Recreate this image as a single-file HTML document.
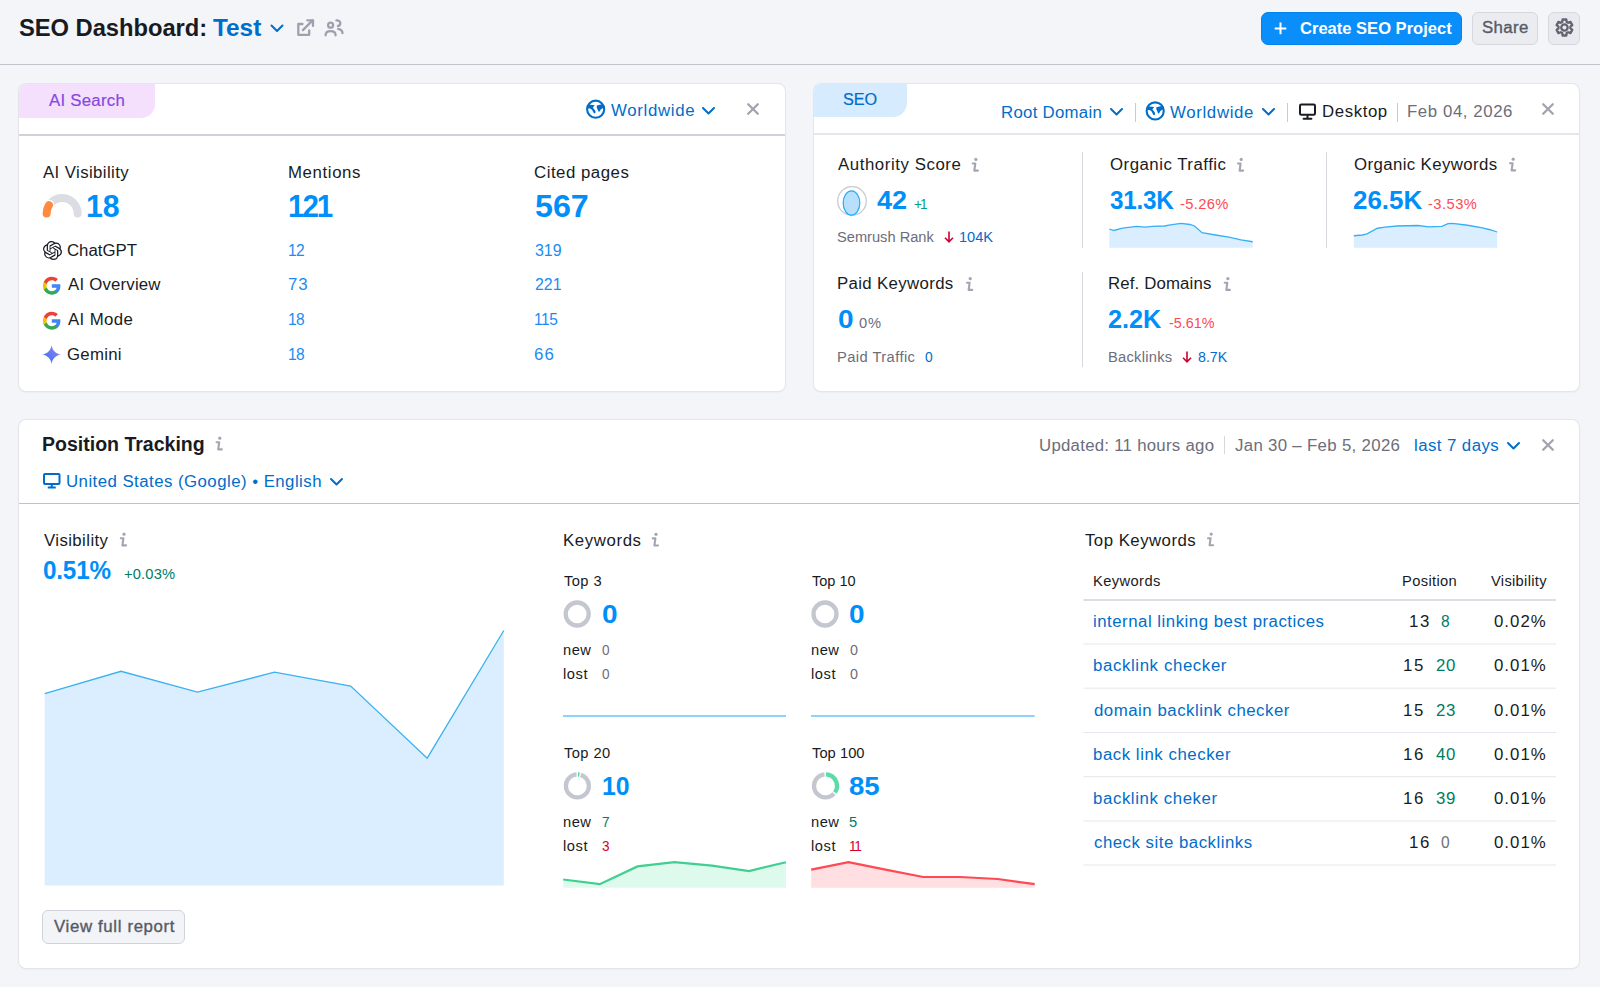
<!DOCTYPE html>
<html><head><meta charset="utf-8">
<style>
*{margin:0;padding:0;box-sizing:border-box}
html,body{width:1600px;height:987px;overflow:hidden;background:#f4f5f9;font-family:"Liberation Sans",sans-serif;color:#191b23}
.t{position:absolute;white-space:nowrap}
.a{position:absolute}
.card{position:absolute;background:#fff;border-radius:7px;box-shadow:0 0 0 1px #e4e5eb,0 1px 2px rgba(25,27,35,.10)}
.hl{position:absolute;height:1px;background:#c4c7cf}
.vl{position:absolute;width:1px;background:#d6d8de}
svg{position:absolute;overflow:visible}
</style></head><body>
<!-- header -->
<div class="hl" style="left:0;top:64px;width:1600px;background:#bfc2cb"></div>
<svg style="left:270px;top:24px" width="14" height="9" viewBox="0 0 14 9"><polyline points="1.5,1.5 7,7 12.5,1.5" fill="none" stroke="#006dca" stroke-width="2" stroke-linecap="round" stroke-linejoin="round"/></svg>
<!-- external link -->
<svg style="left:0;top:0" width="1600" height="987"><g fill="none" stroke="#9ea1ad" stroke-width="2.3" stroke-linecap="round" stroke-linejoin="round"><path d="M302.5,24 H298.3 V34.8 H309.2 V30.5"/><path d="M302.9,30.1 L312.6,20.4"/><path d="M307.3,20.3 H313 V25.9"/>
<circle cx="330.6" cy="25.2" r="2.5"/><path d="M325.6,35.3 C325.6,32.7 327.6,31.2 330.6,31.2 C333.6,31.2 335.6,32.7 335.6,35.3"/><path d="M336.4,20.4 C338.8,20.1 340.3,21.6 340.3,23.3 C340.3,24.9 339.3,25.8 337.9,26"/><path d="M338.2,28.9 C340.9,29.5 342.5,31.2 342.5,33.2"/></g></svg>
<!-- primary button -->
<div class="a" style="left:1261px;top:11.5px;width:201px;height:33px;background:#0a8ef9;border:1px solid #0483ec;border-radius:7px"></div>
<svg style="left:1273.5px;top:21.5px" width="13" height="13" viewBox="0 0 13 13"><path d="M6.5 0.6V12.2M0.7 6.4H12.3" stroke="#fff" stroke-width="2"/></svg>
<div class="a" style="left:1472px;top:11.5px;width:66px;height:33px;background:#ebecf0;border:1px solid #d5d7dd;border-radius:6px"></div>
<div class="a" style="left:1548px;top:11.5px;width:32px;height:33px;background:#e9eaf0;border:1px solid #d5d7dd;border-radius:6px"></div>
<svg style="left:0;top:0" width="1600" height="987"><path fill="none" stroke="#62646f" stroke-width="2.3" stroke-linejoin="round" d="M1562.61,19.51 L1566.29,19.51 L1566.70,21.94 L1568.14,22.77 L1570.45,21.91 L1572.29,25.10 L1570.39,26.66 L1570.39,28.34 L1572.29,29.90 L1570.45,33.09 L1568.14,32.23 L1566.70,33.06 L1566.29,35.49 L1562.61,35.49 L1562.20,33.06 L1560.76,32.23 L1558.45,33.09 L1556.61,29.90 L1558.51,28.34 L1558.51,26.66 L1556.61,25.10 L1558.45,21.91 L1560.76,22.77 L1562.20,21.94Z"/><circle cx="1564.45" cy="27.5" r="3.2" fill="none" stroke="#62646f" stroke-width="2.3"/></svg>

<!-- AI card -->
<div class="card" style="left:19px;top:84px;width:766px;height:307px"></div>
<div class="a" style="left:19px;top:84px;width:136px;height:34px;background:#f4e0fd;border-radius:7px 0 14px 0"></div>
<div class="hl" style="left:19px;top:134px;width:766px;height:2px;background:#d0d1d9"></div>
<!-- globe -->
<svg style="left:0;top:0" width="1600" height="987"><g transform="translate(595.66,109.2)"><circle cx="0" cy="0" r="8.55" fill="none" stroke="#006dca" stroke-width="2.1"/><path fill="#006dca" d="M-7.9,-4.3 C-5.5,-4.6 -3,-4.4 -0.9,-3.9 C-1.6,-3.1 -2.6,-2 -2.7,-1.2 C-1.6,-0.2 -0.3,1 -0.15,2.4 C0,3.4 -0.4,4.2 -1.1,4.3 C-1.8,4.3 -2.3,3.3 -2.8,2.1 C-3.4,0.6 -4.6,-0.5 -6.2,-0.8 L-8.2,-1 Z"/><path fill="#006dca" d="M1.3,-3.6 C3.2,-4.2 5,-4.6 6.6,-5 L8.3,-2.4 L8,-1.3 C6.8,-1 5.6,-0.3 4.9,0.6 C4.3,1.5 4,2.6 3.5,2.6 C2.9,2.6 2.5,1.9 2.3,1.1 C2,-0.1 1.2,-0.9 1.1,-1.8 C1,-2.6 1.1,-3.2 1.3,-3.6 Z"/></g></svg>
<svg style="left:702px;top:107px" width="13" height="8" viewBox="0 0 13 8"><polyline points="1,1 6.5,6.5 12,1" fill="none" stroke="#006dca" stroke-width="2" stroke-linecap="round" stroke-linejoin="round"/></svg>
<svg style="left:747px;top:103px" width="12" height="12" viewBox="0 0 12 12"><path d="M1.2 1.2L10.8 10.8M10.8 1.2L1.2 10.8" stroke="#a1a4b0" stroke-width="2.3" stroke-linecap="round"/></svg>
<!-- gauge -->
<svg style="left:0;top:0" width="1600" height="987"><path d="M46.6,213.5 A15.5,15.5 0 0 1 77.6,213.5" fill="none" stroke="#dcdde3" stroke-width="8" stroke-linecap="round"/><path d="M46.6,213.5 A15.5,15.5 0 0 1 49.0,205.2" fill="none" stroke="#fff" stroke-width="11" stroke-linecap="round"/><path d="M46.6,213.5 A15.5,15.5 0 0 1 49.0,205.2" fill="none" stroke="#ff8a40" stroke-width="8" stroke-linecap="round"/></svg>
<!-- chatgpt -->
<svg style="left:42.5px;top:241px" width="19" height="19" viewBox="0 0 24 24"><path fill="#191b23" d="M22.2819 9.8211a5.9847 5.9847 0 0 0-.5157-4.9108 6.0462 6.0462 0 0 0-6.5098-2.9A6.0651 6.0651 0 0 0 4.9807 4.1818a5.9847 5.9847 0 0 0-3.9977 2.9 6.0462 6.0462 0 0 0 .7427 7.0966 5.98 5.98 0 0 0 .511 4.9107 6.051 6.051 0 0 0 6.5146 2.9001A5.9847 5.9847 0 0 0 13.2599 24a6.0557 6.0557 0 0 0 5.7718-4.2058 5.9894 5.9894 0 0 0 3.9977-2.9001 6.0557 6.0557 0 0 0-.7475-7.0729zm-9.022 12.6081a4.4755 4.4755 0 0 1-2.8764-1.0408l.1419-.0804 4.7783-2.7582a.7948.7948 0 0 0 .3927-.6813v-6.7369l2.02 1.1686a.071.071 0 0 1 .038.052v5.5826a4.504 4.504 0 0 1-4.4945 4.4944zm-9.6607-4.1254a4.4708 4.4708 0 0 1-.5346-3.0137l.142.0852 4.783 2.7582a.7712.7712 0 0 0 .7806 0l5.8428-3.3685v2.3324a.0804.0804 0 0 1-.0332.0615L9.74 19.9502a4.4992 4.4992 0 0 1-6.1408-1.6464zM2.3408 7.8956a4.485 4.485 0 0 1 2.3655-1.9728V11.6a.7664.7664 0 0 0 .3879.6765l5.8144 3.3543-2.0201 1.1685a.0757.0757 0 0 1-.071 0l-4.8303-2.7865A4.504 4.504 0 0 1 2.3408 7.872zm16.5963 3.8558L13.1038 8.364 15.1192 7.2a.0757.0757 0 0 1 .071 0l4.8303 2.7913a4.4944 4.4944 0 0 1-.6765 8.1042v-5.6772a.79.79 0 0 0-.407-.667zm2.0107-3.0231l-.142-.0852-4.7735-2.7818a.7759.7759 0 0 0-.7854 0L9.409 9.2297V6.8974a.0662.0662 0 0 1 .0284-.0615l4.8303-2.7866a4.4992 4.4992 0 0 1 6.6802 4.66zM8.3065 12.863l-2.02-1.1638a.0804.0804 0 0 1-.038-.0567V6.0742a4.4992 4.4992 0 0 1 7.3757-3.4537l-.142.0805L8.704 5.459a.7948.7948 0 0 0-.3927.6813zm1.0976-2.3654l2.602-1.4998 2.6069 1.4998v2.9994l-2.5974 1.5-2.6067-1.5Z"/></svg>
<!-- google G x2 -->
<svg style="left:41.8px;top:275.8px" width="19.6" height="19.6" viewBox="0 0 48 48"><path fill="#4285F4" d="M45.1 24.5c0-1.6-.1-3.1-.4-4.5H24v8.5h11.8c-.5 2.7-2.1 5-4.4 6.6v5.5h7.1c4.2-3.9 6.6-9.5 6.6-16.1z"/><path fill="#34A853" d="M24 46c5.9 0 10.9-2 14.5-5.3l-7.1-5.5c-2 1.3-4.5 2.1-7.4 2.1-5.7 0-10.6-3.9-12.3-9.1H4.4v5.7C8 41.1 15.4 46 24 46z"/><path fill="#FBBC05" d="M11.7 28.2c-.4-1.3-.7-2.7-.7-4.2s.3-2.9.7-4.2v-5.7H4.4C2.9 17.1 2 20.4 2 24s.9 6.9 2.4 9.9l7.3-5.7z"/><path fill="#EA4335" d="M24 10.7c3.2 0 6.1 1.1 8.4 3.3l6.3-6.3C34.9 4.2 29.9 2 24 2 15.4 2 8 6.9 4.4 14.1l7.3 5.7c1.7-5.2 6.6-9.1 12.3-9.1z"/></svg>
<svg style="left:41.8px;top:310.8px" width="19.6" height="19.6" viewBox="0 0 48 48"><path fill="#4285F4" d="M45.1 24.5c0-1.6-.1-3.1-.4-4.5H24v8.5h11.8c-.5 2.7-2.1 5-4.4 6.6v5.5h7.1c4.2-3.9 6.6-9.5 6.6-16.1z"/><path fill="#34A853" d="M24 46c5.9 0 10.9-2 14.5-5.3l-7.1-5.5c-2 1.3-4.5 2.1-7.4 2.1-5.7 0-10.6-3.9-12.3-9.1H4.4v5.7C8 41.1 15.4 46 24 46z"/><path fill="#FBBC05" d="M11.7 28.2c-.4-1.3-.7-2.7-.7-4.2s.3-2.9.7-4.2v-5.7H4.4C2.9 17.1 2 20.4 2 24s.9 6.9 2.4 9.9l7.3-5.7z"/><path fill="#EA4335" d="M24 10.7c3.2 0 6.1 1.1 8.4 3.3l6.3-6.3C34.9 4.2 29.9 2 24 2 15.4 2 8 6.9 4.4 14.1l7.3 5.7c1.7-5.2 6.6-9.1 12.3-9.1z"/></svg>
<!-- gemini -->
<svg style="left:42.3px;top:344.6px" width="19.2" height="19.2" viewBox="0 0 24 24"><defs><linearGradient id="gem" x1="0" y1="1" x2="1" y2="0"><stop offset="0" stop-color="#1c7df2"/><stop offset="0.55" stop-color="#6e79f0"/><stop offset="1" stop-color="#a68ae6"/></linearGradient></defs><path fill="url(#gem)" d="M12 0C12.6 6.4 17.6 11.4 24 12C17.6 12.6 12.6 17.6 12 24C11.4 17.6 6.4 12.6 0 12C6.4 11.4 11.4 6.4 12 0Z"/></svg>

<!-- SEO card -->
<div class="card" style="left:814px;top:84px;width:765px;height:307px"></div>
<div class="a" style="left:814px;top:84px;width:93px;height:33px;background:#d6ebfd;border-radius:7px 0 14px 0"></div>
<div class="hl" style="left:814px;top:133px;width:765px;height:2px;background:#e6e7ec"></div>
<svg style="left:1110px;top:108px" width="13" height="8" viewBox="0 0 13 8"><polyline points="1,1 6.5,6.5 12,1" fill="none" stroke="#006dca" stroke-width="2" stroke-linecap="round" stroke-linejoin="round"/></svg>
<div class="vl" style="left:1135px;top:103px;height:19px;background:#c9cbd2"></div>
<svg style="left:0;top:0" width="1600" height="987"><g transform="translate(1155.2,110.9)"><circle cx="0" cy="0" r="8.55" fill="none" stroke="#006dca" stroke-width="2.1"/><path fill="#006dca" d="M-7.9,-4.3 C-5.5,-4.6 -3,-4.4 -0.9,-3.9 C-1.6,-3.1 -2.6,-2 -2.7,-1.2 C-1.6,-0.2 -0.3,1 -0.15,2.4 C0,3.4 -0.4,4.2 -1.1,4.3 C-1.8,4.3 -2.3,3.3 -2.8,2.1 C-3.4,0.6 -4.6,-0.5 -6.2,-0.8 L-8.2,-1 Z"/><path fill="#006dca" d="M1.3,-3.6 C3.2,-4.2 5,-4.6 6.6,-5 L8.3,-2.4 L8,-1.3 C6.8,-1 5.6,-0.3 4.9,0.6 C4.3,1.5 4,2.6 3.5,2.6 C2.9,2.6 2.5,1.9 2.3,1.1 C2,-0.1 1.2,-0.9 1.1,-1.8 C1,-2.6 1.1,-3.2 1.3,-3.6 Z"/></g></svg>
<svg style="left:1262px;top:108px" width="13" height="8" viewBox="0 0 13 8"><polyline points="1,1 6.5,6.5 12,1" fill="none" stroke="#006dca" stroke-width="2" stroke-linecap="round" stroke-linejoin="round"/></svg>
<div class="vl" style="left:1287px;top:103px;height:19px;background:#c9cbd2"></div>
<!-- desktop icon -->
<svg style="left:1299px;top:104px" width="17" height="16" viewBox="0 0 17 16"><rect x="1" y="0.6" width="15" height="10.2" rx="1.3" fill="none" stroke="#191b23" stroke-width="2"/><path d="M8.5 12V14M4.6 14.8H12.4" stroke="#191b23" stroke-width="2" stroke-linecap="round"/></svg>
<div class="vl" style="left:1397px;top:103px;height:19px;background:#c9cbd2"></div>
<svg style="left:1542px;top:103px" width="12" height="12" viewBox="0 0 12 12"><path d="M1.2 1.2L10.8 10.8M10.8 1.2L1.2 10.8" stroke="#a1a4b0" stroke-width="2.3" stroke-linecap="round"/></svg>
<!-- AS icon -->
<svg style="left:837px;top:185.5px" width="30" height="30" viewBox="0 0 30 30"><circle cx="15" cy="15" r="14.3" fill="#fff" stroke="#c4c7cf" stroke-width="1.2"/><ellipse cx="14.5" cy="17" rx="8.3" ry="12.1" fill="#b8e0fd" stroke="#22adff" stroke-width="1.2"/></svg>
<div class="vl" style="left:1082px;top:152px;height:96px"></div>
<div class="vl" style="left:1326px;top:152px;height:96px"></div>
<div class="vl" style="left:1082px;top:272px;height:95px"></div>
<svg style="left:944px;top:231px" width="10" height="12" viewBox="0 0 10 12"><path d="M5 0.5V10.5M1 6.8L5 10.8L9 6.8" fill="none" stroke="#d1002f" stroke-width="1.6"/></svg>
<svg style="left:1182px;top:351px" width="10" height="12" viewBox="0 0 10 12"><path d="M5 0.5V10.5M1 6.8L5 10.8L9 6.8" fill="none" stroke="#d1002f" stroke-width="1.6"/></svg>
<!-- sparklines -->
<svg style="left:0;top:0" width="1600" height="987"><path d="M1109.3,229 L1113.8,230.5 1122.5,228.2 1136.7,226.4 1145,227.2 1152.5,226.4 1164.5,226 1170.5,224.8 1181,223.3 1190,224.5 1194.5,226 1202,232.75 1215.5,235 1229,237.2 1241,239.8 1252.7,241.75 L1252.7,247.8 1109.3,247.8Z" fill="#dbeeff"/><path d="M1109.3,229 L1113.8,230.5 1122.5,228.2 1136.7,226.4 1145,227.2 1152.5,226.4 1164.5,226 1170.5,224.8 1181,223.3 1190,224.5 1194.5,226 1202,232.75 1215.5,235 1229,237.2 1241,239.8 1252.7,241.75" fill="none" stroke="#36b0f5" stroke-width="1.3"/>
<path d="M1353.8,235.75 L1362.5,235 1367,233.8 1377.5,228.25 1385,227.2 1397,226 1418,225.5 1428.5,226.9 1442,226.3 1448,223.6 1452.5,223.45 1467.5,225.25 1482.5,227.8 1490,229.75 1497.2,232 L1497.2,247.8 1353.8,247.8Z" fill="#dbeeff"/><path d="M1353.8,235.75 L1362.5,235 1367,233.8 1377.5,228.25 1385,227.2 1397,226 1418,225.5 1428.5,226.9 1442,226.3 1448,223.6 1452.5,223.45 1467.5,225.25 1482.5,227.8 1490,229.75 1497.2,232" fill="none" stroke="#36b0f5" stroke-width="1.3"/></svg>


<!-- PT card -->
<div class="card" style="left:19px;top:420px;width:1560px;height:548px"></div>
<div class="hl" style="left:19px;top:503px;width:1560px;background:#c0c3cc"></div>
<svg style="left:43px;top:473px" width="18" height="16" viewBox="0 0 18 16"><rect x="1" y="1" width="15.5" height="10" rx="1" fill="none" stroke="#006dca" stroke-width="2"/><path d="M8.75 11V14M4.75 14.5H12.75" stroke="#006dca" stroke-width="2"/></svg>
<svg style="left:330px;top:477.5px" width="13" height="8" viewBox="0 0 13 8"><polyline points="1,1 6.5,6.5 12,1" fill="none" stroke="#006dca" stroke-width="2" stroke-linecap="round" stroke-linejoin="round"/></svg>
<div class="vl" style="left:1223.5px;top:436px;height:18px;background:#d6d8de"></div>
<svg style="left:1507px;top:441.5px" width="13" height="8" viewBox="0 0 13 8"><polyline points="1,1 6.5,6.5 12,1" fill="none" stroke="#006dca" stroke-width="2" stroke-linecap="round" stroke-linejoin="round"/></svg>
<svg style="left:1542px;top:439px" width="12" height="12" viewBox="0 0 12 12"><path d="M1.2 1.2L10.8 10.8M10.8 1.2L1.2 10.8" stroke="#a1a4b0" stroke-width="2.3" stroke-linecap="round"/></svg>
<!-- visibility chart -->
<svg style="left:0;top:0" width="1600" height="987"><path d="M44.7,693.6 L121,671.3 197.5,692.1 274.4,672.2 350.7,686 427.2,758.2 503.8,630.5 L503.8,885.6 44.7,885.6Z" fill="#dbeeff"/><path d="M44.7,693.6 L121,671.3 197.5,692.1 274.4,672.2 350.7,686 427.2,758.2 503.8,630.5" fill="none" stroke="#3cb1f0" stroke-width="1.3"/>
<!-- keyword lines -->
<line x1="563" y1="716" x2="786" y2="716" stroke="#8fd1fb" stroke-width="2"/>
<line x1="811" y1="716" x2="1034.7" y2="716" stroke="#8fd1fb" stroke-width="2"/>
<path d="M563.2,879.5 L599.8,884.2 637.5,866.4 674.4,862.2 712,865.6 749,871.1 785.9,862.2 L785.9,887.8 563.2,887.8Z" fill="#defaed"/><path d="M563.2,879.5 L599.8,884.2 637.5,866.4 674.4,862.2 712,865.6 749,871.1 785.9,862.2" fill="none" stroke="#3fcf91" stroke-width="2.2"/>
<path d="M811.2,869.6 L848.5,862.2 885.5,869.6 923.2,877 960,877 997.8,879 1034.7,884.2 L1034.7,887.8 811.2,887.8Z" fill="#ffdfe1"/><path d="M811.2,869.6 L848.5,862.2 885.5,869.6 923.2,877 960,877 997.8,879 1034.7,884.2" fill="none" stroke="#ff4953" stroke-width="2.2"/>
<!-- donuts -->
<circle cx="577.2" cy="614" r="11.5" fill="none" stroke="#c4c7cf" stroke-width="4.3"/>
<circle cx="825" cy="614" r="11.5" fill="none" stroke="#c4c7cf" stroke-width="4.3"/>
<circle cx="577.4" cy="785.9" r="11.5" fill="none" stroke="#c4c7cf" stroke-width="4.3"/>
<path d="M576.60,774.43 A11.5,11.5 0 0 1 580.76,774.90" fill="none" stroke="#fff" stroke-width="5.5"/>
<path d="M578.00,774.42 A11.5,11.5 0 0 1 579.40,774.57" fill="none" stroke="#4bd69f" stroke-width="4.3"/>
<circle cx="825.5" cy="785.9" r="11.5" fill="none" stroke="#c4c7cf" stroke-width="4.3"/>
<path d="M824.50,774.44 A11.5,11.5 0 0 1 834.05,793.60" fill="none" stroke="#fff" stroke-width="5.5"/>
<path d="M825.90,774.41 A11.5,11.5 0 0 1 834.92,792.50" fill="none" stroke="#59dca8" stroke-width="4.3"/>
<!-- table lines -->
<rect x="1083.5" y="599.2" width="472.5" height="1.6" fill="#d6d8de"/>
<rect x="1083.5" y="643.5" width="472.5" height="1" fill="#e6e7ec"/>
<rect x="1083.5" y="687.7" width="472.5" height="1" fill="#e6e7ec"/>
<rect x="1083.5" y="732" width="472.5" height="1" fill="#e6e7ec"/>
<rect x="1083.5" y="776.2" width="472.5" height="1" fill="#e6e7ec"/>
<rect x="1083.5" y="820.5" width="472.5" height="1" fill="#e6e7ec"/>
<rect x="1083.5" y="864.5" width="472.5" height="1" fill="#e6e7ec"/>
</svg>
<div class="a" style="left:42px;top:910px;width:143px;height:34px;background:#f3f4f7;border:1px solid #d1d3da;border-radius:6px"></div>
<!-- info icons -->
<svg style="left:0;top:0" width="1600" height="987"><defs><g id="info"><circle cx="3.8" cy="1.7" r="1.6" fill="#a3a6b2"/><path d="M0.6 5.8H3.2L2.2 12.9H5.8" fill="none" stroke="#a3a6b2" stroke-width="2.1" stroke-linecap="round" stroke-linejoin="round"/></g></defs><use href="#info" x="972.1" y="157.7"/><use href="#info" x="1237.4" y="157.7"/><use href="#info" x="1509.4" y="157.5"/><use href="#info" x="966.4" y="277"/><use href="#info" x="1224.1" y="277"/><use href="#info" x="216" y="436.5"/><use href="#info" x="120.2" y="532.5"/><use href="#info" x="652.2" y="532.6"/><use href="#info" x="1207.4" y="532.4"/></svg>
<div class="t" style="left:18.78px;top:15.50px;font-size:24.5px;line-height:24.5px;font-weight:700;color:#191b23;letter-spacing:-0.055px;transform:scaleX(0.9700);transform-origin:0 0;">SEO Dashboard:</div>
<div class="t" style="left:213.20px;top:15.50px;font-size:24.5px;line-height:24.5px;font-weight:700;color:#006dca;letter-spacing:0.000px;transform:scaleX(0.9939);transform-origin:0 0;">Test</div>
<div class="t" style="left:1299.90px;top:19.60px;font-size:16.5px;line-height:16.5px;font-weight:700;color:#ffffff;letter-spacing:0.000px;transform:scaleX(1.0026);transform-origin:0 0;">Create SEO Project</div>
<div class="t" style="left:1482.30px;top:20.40px;font-size:16px;line-height:16px;font-weight:400;color:#575a66;letter-spacing:0.333px;transform:scaleX(1.0500);transform-origin:0 0;-webkit-text-stroke:0.35px #575a66">Share</div>
<div class="t" style="left:48.50px;top:93.00px;font-size:16px;line-height:16px;font-weight:400;color:#8649e1;letter-spacing:0.238px;transform:scaleX(1.0500);transform-origin:0 0;-webkit-text-stroke:0.2px #8649e1">AI Search</div>
<div class="t" style="left:610.60px;top:102.50px;font-size:16px;line-height:16px;font-weight:400;color:#006dca;letter-spacing:0.655px;transform:scaleX(1.0500);transform-origin:0 0;">Worldwide</div>
<div class="t" style="left:43.20px;top:165.00px;font-size:16px;line-height:16px;font-weight:400;color:#191b23;letter-spacing:0.377px;transform:scaleX(1.0500);transform-origin:0 0;">AI Visibility</div>
<div class="t" style="left:288.45px;top:165.00px;font-size:16px;line-height:16px;font-weight:400;color:#191b23;letter-spacing:0.585px;transform:scaleX(1.0500);transform-origin:0 0;">Mentions</div>
<div class="t" style="left:534.35px;top:165.00px;font-size:16px;line-height:16px;font-weight:400;color:#191b23;letter-spacing:0.495px;transform:scaleX(1.0500);transform-origin:0 0;">Cited pages</div>
<div class="t" style="left:85.91px;top:190.60px;font-size:30.5px;line-height:30.5px;font-weight:700;color:#008ff8;letter-spacing:0.000px;transform:scaleX(0.9935);transform-origin:0 0;">18</div>
<div class="t" style="left:287.56px;top:190.60px;font-size:30.5px;line-height:30.5px;font-weight:700;color:#008ff8;letter-spacing:-2.129px;transform:scaleX(0.9700);transform-origin:0 0;">121</div>
<div class="t" style="left:534.94px;top:190.60px;font-size:30.5px;line-height:30.5px;font-weight:700;color:#008ff8;letter-spacing:0.000px;transform:scaleX(1.0571);transform-origin:0 0;">567</div>
<div class="t" style="left:66.55px;top:243.00px;font-size:16px;line-height:16px;font-weight:400;color:#191b23;letter-spacing:0.000px;transform:scaleX(1.0485);transform-origin:0 0;">ChatGPT</div>
<div class="t" style="left:288.03px;top:243.00px;font-size:16px;line-height:16px;font-weight:400;color:#1a8cf5;letter-spacing:-0.763px;transform:scaleX(0.9700);transform-origin:0 0;">12</div>
<div class="t" style="left:535.40px;top:243.00px;font-size:16px;line-height:16px;font-weight:400;color:#1a8cf5;letter-spacing:0.000px;transform:scaleX(0.9942);transform-origin:0 0;">319</div>
<div class="t" style="left:67.60px;top:277.20px;font-size:16px;line-height:16px;font-weight:400;color:#191b23;letter-spacing:0.186px;transform:scaleX(1.0500);transform-origin:0 0;">AI Overview</div>
<div class="t" style="left:287.95px;top:277.20px;font-size:16px;line-height:16px;font-weight:400;color:#1a8cf5;letter-spacing:0.857px;transform:scaleX(1.0500);transform-origin:0 0;">73</div>
<div class="t" style="left:535.40px;top:277.20px;font-size:16px;line-height:16px;font-weight:400;color:#1a8cf5;letter-spacing:0.000px;transform:scaleX(0.9942);transform-origin:0 0;">221</div>
<div class="t" style="left:67.60px;top:312.40px;font-size:16px;line-height:16px;font-weight:400;color:#191b23;letter-spacing:0.373px;transform:scaleX(1.0500);transform-origin:0 0;">AI Mode</div>
<div class="t" style="left:288.03px;top:312.40px;font-size:16px;line-height:16px;font-weight:400;color:#1a8cf5;letter-spacing:-0.763px;transform:scaleX(0.9700);transform-origin:0 0;">18</div>
<div class="t" style="left:533.63px;top:312.40px;font-size:16px;line-height:16px;font-weight:400;color:#1a8cf5;letter-spacing:-0.454px;transform:scaleX(0.9700);transform-origin:0 0;">115</div>
<div class="t" style="left:66.55px;top:346.70px;font-size:16px;line-height:16px;font-weight:400;color:#191b23;letter-spacing:0.238px;transform:scaleX(1.0500);transform-origin:0 0;">Gemini</div>
<div class="t" style="left:288.03px;top:346.70px;font-size:16px;line-height:16px;font-weight:400;color:#1a8cf5;letter-spacing:-0.763px;transform:scaleX(0.9700);transform-origin:0 0;">18</div>
<div class="t" style="left:533.95px;top:346.70px;font-size:16px;line-height:16px;font-weight:400;color:#1a8cf5;letter-spacing:1.095px;transform:scaleX(1.0500);transform-origin:0 0;">66</div>
<div class="t" style="left:842.89px;top:92.00px;font-size:16px;line-height:16px;font-weight:400;color:#006dca;letter-spacing:0.000px;transform:scaleX(1.0125);transform-origin:0 0;-webkit-text-stroke:0.2px #006dca">SEO</div>
<div class="t" style="left:1000.55px;top:105.00px;font-size:16px;line-height:16px;font-weight:400;color:#006dca;letter-spacing:0.267px;transform:scaleX(1.0500);transform-origin:0 0;">Root Domain</div>
<div class="t" style="left:1170.40px;top:105.00px;font-size:16px;line-height:16px;font-weight:400;color:#006dca;letter-spacing:0.631px;transform:scaleX(1.0500);transform-origin:0 0;">Worldwide</div>
<div class="t" style="left:1322.05px;top:104.00px;font-size:16px;line-height:16px;font-weight:400;color:#191b23;letter-spacing:0.563px;transform:scaleX(1.0500);transform-origin:0 0;">Desktop</div>
<div class="t" style="left:1407.35px;top:104.00px;font-size:16px;line-height:16px;font-weight:400;color:#6c6e79;letter-spacing:0.558px;transform:scaleX(1.0500);transform-origin:0 0;">Feb 04, 2026</div>
<div class="t" style="left:838.40px;top:157.00px;font-size:16px;line-height:16px;font-weight:400;color:#191b23;letter-spacing:0.541px;transform:scaleX(1.0500);transform-origin:0 0;">Authority Score</div>
<div class="t" style="left:877.20px;top:188.00px;font-size:25px;line-height:25px;font-weight:700;color:#008ff8;letter-spacing:0.000px;transform:scaleX(1.0778);transform-origin:0 0;">42</div>
<div class="t" style="left:913.50px;top:196.50px;font-size:14px;line-height:14px;font-weight:400;color:#009f81;letter-spacing:-2.082px;transform:scaleX(0.9700);transform-origin:0 0;">+1</div>
<div class="t" style="left:837.35px;top:229.70px;font-size:14px;line-height:14px;font-weight:400;color:#6c6e79;letter-spacing:0.000px;transform:scaleX(1.0457);transform-origin:0 0;">Semrush Rank</div>
<div class="t" style="left:958.96px;top:229.70px;font-size:14px;line-height:14px;font-weight:400;color:#006dca;letter-spacing:0.000px;transform:scaleX(1.0419);transform-origin:0 0;">104K</div>
<div class="t" style="left:1109.75px;top:156.50px;font-size:16px;line-height:16px;font-weight:400;color:#191b23;letter-spacing:0.480px;transform:scaleX(1.0500);transform-origin:0 0;">Organic Traffic</div>
<div class="t" style="left:1109.75px;top:188.00px;font-size:25px;line-height:25px;font-weight:700;color:#008ff8;letter-spacing:-0.242px;transform:scaleX(0.9700);transform-origin:0 0;">31.3K</div>
<div class="t" style="left:1180.20px;top:197.00px;font-size:14px;line-height:14px;font-weight:400;color:#ff4953;letter-spacing:0.343px;transform:scaleX(1.0500);transform-origin:0 0;">-5.26%</div>
<div class="t" style="left:1353.80px;top:156.50px;font-size:16px;line-height:16px;font-weight:400;color:#191b23;letter-spacing:0.371px;transform:scaleX(1.0500);transform-origin:0 0;">Organic Keywords</div>
<div class="t" style="left:1352.76px;top:188.00px;font-size:25px;line-height:25px;font-weight:700;color:#008ff8;letter-spacing:0.000px;transform:scaleX(1.0364);transform-origin:0 0;">26.5K</div>
<div class="t" style="left:1427.75px;top:197.00px;font-size:14px;line-height:14px;font-weight:400;color:#ff4953;letter-spacing:0.429px;transform:scaleX(1.0500);transform-origin:0 0;">-3.53%</div>
<div class="t" style="left:837.35px;top:276.30px;font-size:16px;line-height:16px;font-weight:400;color:#191b23;letter-spacing:0.333px;transform:scaleX(1.0500);transform-origin:0 0;">Paid Keywords</div>
<div class="t" style="left:837.88px;top:306.70px;font-size:25px;line-height:25px;font-weight:700;color:#008ff8;letter-spacing:0.500px;transform:scaleX(1.1200);transform-origin:0 0;">0</div>
<div class="t" style="left:859.40px;top:315.70px;font-size:14px;line-height:14px;font-weight:400;color:#6c6e79;letter-spacing:0.762px;transform:scaleX(1.0500);transform-origin:0 0;">0%</div>
<div class="t" style="left:837.35px;top:349.80px;font-size:14px;line-height:14px;font-weight:400;color:#6c6e79;letter-spacing:0.407px;transform:scaleX(1.0500);transform-origin:0 0;">Paid Traffic</div>
<div class="t" style="left:925.00px;top:349.80px;font-size:14px;line-height:14px;font-weight:400;color:#006dca;letter-spacing:0.000px;transform:scaleX(0.9875);transform-origin:0 0;">0</div>
<div class="t" style="left:1108.45px;top:276.30px;font-size:16px;line-height:16px;font-weight:400;color:#191b23;letter-spacing:0.139px;transform:scaleX(1.0500);transform-origin:0 0;">Ref. Domains</div>
<div class="t" style="left:1108.49px;top:306.70px;font-size:25px;line-height:25px;font-weight:700;color:#008ff8;letter-spacing:0.000px;transform:scaleX(1.0096);transform-origin:0 0;">2.2K</div>
<div class="t" style="left:1168.60px;top:315.70px;font-size:14px;line-height:14px;font-weight:400;color:#ff4953;letter-spacing:0.000px;transform:scaleX(1.0250);transform-origin:0 0;">-5.61%</div>
<div class="t" style="left:1108.45px;top:349.80px;font-size:14px;line-height:14px;font-weight:400;color:#6c6e79;letter-spacing:0.250px;transform:scaleX(1.0500);transform-origin:0 0;">Backlinks</div>
<div class="t" style="left:1197.50px;top:349.80px;font-size:14px;line-height:14px;font-weight:400;color:#006dca;letter-spacing:0.000px;transform:scaleX(1.0138);transform-origin:0 0;">8.7K</div>
<div class="t" style="left:42.27px;top:433.70px;font-size:20px;line-height:20px;font-weight:700;color:#191b23;letter-spacing:0.000px;transform:scaleX(0.9761);transform-origin:0 0;">Position Tracking</div>
<div class="t" style="left:66.25px;top:473.80px;font-size:16px;line-height:16px;font-weight:400;color:#006dca;letter-spacing:0.439px;transform:scaleX(1.0500);transform-origin:0 0;">United States (Google) • English</div>
<div class="t" style="left:1038.55px;top:437.60px;font-size:16px;line-height:16px;font-weight:400;color:#6c6e79;letter-spacing:0.252px;transform:scaleX(1.0500);transform-origin:0 0;">Updated: 11 hours ago</div>
<div class="t" style="left:1234.75px;top:437.60px;font-size:16px;line-height:16px;font-weight:400;color:#6c6e79;letter-spacing:0.306px;transform:scaleX(1.0500);transform-origin:0 0;">Jan 30 – Feb 5, 2026</div>
<div class="t" style="left:1414.45px;top:437.60px;font-size:16px;line-height:16px;font-weight:400;color:#006dca;letter-spacing:0.414px;transform:scaleX(1.0500);transform-origin:0 0;">last 7 days</div>
<div class="t" style="left:43.50px;top:533.00px;font-size:16px;line-height:16px;font-weight:400;color:#191b23;letter-spacing:0.381px;transform:scaleX(1.0500);transform-origin:0 0;">Visibility</div>
<div class="t" style="left:42.83px;top:558.20px;font-size:25px;line-height:25px;font-weight:700;color:#008ff8;letter-spacing:-0.180px;transform:scaleX(0.9700);transform-origin:0 0;">0.51%</div>
<div class="t" style="left:123.80px;top:566.70px;font-size:14px;line-height:14px;font-weight:400;color:#007c65;letter-spacing:0.152px;transform:scaleX(1.0500);transform-origin:0 0;">+0.03%</div>
<div class="t" style="left:562.85px;top:533.20px;font-size:16px;line-height:16px;font-weight:400;color:#191b23;letter-spacing:0.578px;transform:scaleX(1.0500);transform-origin:0 0;">Keywords</div>
<div class="t" style="left:563.80px;top:573.80px;font-size:14px;line-height:14px;font-weight:400;color:#191b23;letter-spacing:0.381px;transform:scaleX(1.0500);transform-origin:0 0;">Top 3</div>
<div class="t" style="left:601.58px;top:601.90px;font-size:25px;line-height:25px;font-weight:700;color:#008ff8;letter-spacing:0.679px;transform:scaleX(1.1200);transform-origin:0 0;">0</div>
<div class="t" style="left:562.75px;top:643.20px;font-size:14px;line-height:14px;font-weight:400;color:#191b23;letter-spacing:0.452px;transform:scaleX(1.0500);transform-origin:0 0;">new</div>
<div class="t" style="left:601.80px;top:643.20px;font-size:14px;line-height:14px;font-weight:400;color:#6c6e79;letter-spacing:-0.371px;transform:scaleX(0.9700);transform-origin:0 0;">0</div>
<div class="t" style="left:562.75px;top:667.00px;font-size:14px;line-height:14px;font-weight:400;color:#191b23;letter-spacing:0.524px;transform:scaleX(1.0500);transform-origin:0 0;">lost</div>
<div class="t" style="left:601.80px;top:667.00px;font-size:14px;line-height:14px;font-weight:400;color:#6c6e79;letter-spacing:-0.371px;transform:scaleX(0.9700);transform-origin:0 0;">0</div>
<div class="t" style="left:811.60px;top:573.80px;font-size:14px;line-height:14px;font-weight:400;color:#191b23;letter-spacing:0.000px;transform:scaleX(1.0381);transform-origin:0 0;">Top 10</div>
<div class="t" style="left:849.38px;top:601.90px;font-size:25px;line-height:25px;font-weight:700;color:#008ff8;letter-spacing:1.036px;transform:scaleX(1.1200);transform-origin:0 0;">0</div>
<div class="t" style="left:810.55px;top:643.20px;font-size:14px;line-height:14px;font-weight:400;color:#191b23;letter-spacing:0.452px;transform:scaleX(1.0500);transform-origin:0 0;">new</div>
<div class="t" style="left:849.60px;top:643.20px;font-size:14px;line-height:14px;font-weight:400;color:#6c6e79;letter-spacing:0.000px;transform:scaleX(1.0250);transform-origin:0 0;">0</div>
<div class="t" style="left:810.55px;top:667.00px;font-size:14px;line-height:14px;font-weight:400;color:#191b23;letter-spacing:0.524px;transform:scaleX(1.0500);transform-origin:0 0;">lost</div>
<div class="t" style="left:849.60px;top:667.00px;font-size:14px;line-height:14px;font-weight:400;color:#6c6e79;letter-spacing:0.000px;transform:scaleX(1.0250);transform-origin:0 0;">0</div>
<div class="t" style="left:563.80px;top:745.80px;font-size:14px;line-height:14px;font-weight:400;color:#191b23;letter-spacing:0.400px;transform:scaleX(1.0500);transform-origin:0 0;">Top 20</div>
<div class="t" style="left:601.71px;top:773.90px;font-size:25px;line-height:25px;font-weight:700;color:#008ff8;letter-spacing:0.000px;transform:scaleX(0.9923);transform-origin:0 0;">10</div>
<div class="t" style="left:562.75px;top:815.20px;font-size:14px;line-height:14px;font-weight:400;color:#191b23;letter-spacing:0.452px;transform:scaleX(1.0500);transform-origin:0 0;">new</div>
<div class="t" style="left:601.80px;top:815.20px;font-size:14px;line-height:14px;font-weight:400;color:#007c65;letter-spacing:-0.093px;transform:scaleX(0.9700);transform-origin:0 0;">7</div>
<div class="t" style="left:562.75px;top:839.00px;font-size:14px;line-height:14px;font-weight:400;color:#191b23;letter-spacing:0.524px;transform:scaleX(1.0500);transform-origin:0 0;">lost</div>
<div class="t" style="left:601.80px;top:839.00px;font-size:14px;line-height:14px;font-weight:400;color:#d1002f;letter-spacing:-0.577px;transform:scaleX(0.9700);transform-origin:0 0;">3</div>
<div class="t" style="left:811.60px;top:745.80px;font-size:14px;line-height:14px;font-weight:400;color:#191b23;letter-spacing:0.032px;transform:scaleX(1.0500);transform-origin:0 0;">Top 100</div>
<div class="t" style="left:849.40px;top:773.90px;font-size:25px;line-height:25px;font-weight:700;color:#008ff8;letter-spacing:0.000px;transform:scaleX(1.1037);transform-origin:0 0;">85</div>
<div class="t" style="left:810.55px;top:815.20px;font-size:14px;line-height:14px;font-weight:400;color:#191b23;letter-spacing:0.452px;transform:scaleX(1.0500);transform-origin:0 0;">new</div>
<div class="t" style="left:848.55px;top:815.20px;font-size:14px;line-height:14px;font-weight:400;color:#007c65;letter-spacing:0.429px;transform:scaleX(1.0500);transform-origin:0 0;">5</div>
<div class="t" style="left:810.55px;top:839.00px;font-size:14px;line-height:14px;font-weight:400;color:#191b23;letter-spacing:0.524px;transform:scaleX(1.0500);transform-origin:0 0;">lost</div>
<div class="t" style="left:848.63px;top:839.00px;font-size:14px;line-height:14px;font-weight:400;color:#d1002f;letter-spacing:-1.454px;transform:scaleX(0.9700);transform-origin:0 0;">11</div>
<div class="t" style="left:1085.00px;top:533.00px;font-size:16px;line-height:16px;font-weight:400;color:#191b23;letter-spacing:0.450px;transform:scaleX(1.0500);transform-origin:0 0;">Top Keywords</div>
<div class="t" style="left:1092.65px;top:573.60px;font-size:14px;line-height:14px;font-weight:400;color:#191b23;letter-spacing:0.381px;transform:scaleX(1.0500);transform-origin:0 0;">Keywords</div>
<div class="t" style="left:1402.35px;top:573.60px;font-size:14px;line-height:14px;font-weight:400;color:#191b23;letter-spacing:0.333px;transform:scaleX(1.0500);transform-origin:0 0;">Position</div>
<div class="t" style="left:1490.80px;top:573.60px;font-size:14px;line-height:14px;font-weight:400;color:#191b23;letter-spacing:0.286px;transform:scaleX(1.0500);transform-origin:0 0;">Visibility</div>
<div class="t" style="left:1093.15px;top:614.20px;font-size:16px;line-height:16px;font-weight:400;color:#006dca;letter-spacing:0.483px;transform:scaleX(1.0500);transform-origin:0 0;">internal linking best practices</div>
<div class="t" style="left:1408.90px;top:614.20px;font-size:16px;line-height:16px;font-weight:400;color:#191b23;letter-spacing:1.667px;transform:scaleX(1.0500);transform-origin:0 0;">13</div>
<div class="t" style="left:1441.15px;top:614.20px;font-size:16px;line-height:16px;font-weight:400;color:#007c65;letter-spacing:-0.031px;transform:scaleX(0.9700);transform-origin:0 0;">8</div>
<div class="t" style="left:1494.00px;top:614.20px;font-size:16px;line-height:16px;font-weight:400;color:#191b23;letter-spacing:0.964px;transform:scaleX(1.0500);transform-origin:0 0;">0.02%</div>
<div class="t" style="left:1093.15px;top:658.45px;font-size:16px;line-height:16px;font-weight:400;color:#006dca;letter-spacing:0.587px;transform:scaleX(1.0500);transform-origin:0 0;">backlink checker</div>
<div class="t" style="left:1403.25px;top:658.45px;font-size:16px;line-height:16px;font-weight:400;color:#191b23;letter-spacing:1.667px;transform:scaleX(1.0500);transform-origin:0 0;">15</div>
<div class="t" style="left:1435.90px;top:658.45px;font-size:16px;line-height:16px;font-weight:400;color:#007c65;letter-spacing:0.667px;transform:scaleX(1.0500);transform-origin:0 0;">20</div>
<div class="t" style="left:1494.00px;top:658.45px;font-size:16px;line-height:16px;font-weight:400;color:#191b23;letter-spacing:0.964px;transform:scaleX(1.0500);transform-origin:0 0;">0.01%</div>
<div class="t" style="left:1094.20px;top:702.70px;font-size:16px;line-height:16px;font-weight:400;color:#006dca;letter-spacing:0.496px;transform:scaleX(1.0500);transform-origin:0 0;">domain backlink checker</div>
<div class="t" style="left:1403.25px;top:702.70px;font-size:16px;line-height:16px;font-weight:400;color:#191b23;letter-spacing:1.667px;transform:scaleX(1.0500);transform-origin:0 0;">15</div>
<div class="t" style="left:1435.90px;top:702.70px;font-size:16px;line-height:16px;font-weight:400;color:#007c65;letter-spacing:0.667px;transform:scaleX(1.0500);transform-origin:0 0;">23</div>
<div class="t" style="left:1494.00px;top:702.70px;font-size:16px;line-height:16px;font-weight:400;color:#191b23;letter-spacing:0.964px;transform:scaleX(1.0500);transform-origin:0 0;">0.01%</div>
<div class="t" style="left:1093.15px;top:746.95px;font-size:16px;line-height:16px;font-weight:400;color:#006dca;letter-spacing:0.518px;transform:scaleX(1.0500);transform-origin:0 0;">back link checker</div>
<div class="t" style="left:1403.25px;top:746.95px;font-size:16px;line-height:16px;font-weight:400;color:#191b23;letter-spacing:1.667px;transform:scaleX(1.0500);transform-origin:0 0;">16</div>
<div class="t" style="left:1435.90px;top:746.95px;font-size:16px;line-height:16px;font-weight:400;color:#007c65;letter-spacing:0.667px;transform:scaleX(1.0500);transform-origin:0 0;">40</div>
<div class="t" style="left:1494.00px;top:746.95px;font-size:16px;line-height:16px;font-weight:400;color:#191b23;letter-spacing:0.964px;transform:scaleX(1.0500);transform-origin:0 0;">0.01%</div>
<div class="t" style="left:1093.15px;top:791.20px;font-size:16px;line-height:16px;font-weight:400;color:#006dca;letter-spacing:0.568px;transform:scaleX(1.0500);transform-origin:0 0;">backlink cheker</div>
<div class="t" style="left:1403.25px;top:791.20px;font-size:16px;line-height:16px;font-weight:400;color:#191b23;letter-spacing:1.667px;transform:scaleX(1.0500);transform-origin:0 0;">16</div>
<div class="t" style="left:1435.90px;top:791.20px;font-size:16px;line-height:16px;font-weight:400;color:#007c65;letter-spacing:0.667px;transform:scaleX(1.0500);transform-origin:0 0;">39</div>
<div class="t" style="left:1494.00px;top:791.20px;font-size:16px;line-height:16px;font-weight:400;color:#191b23;letter-spacing:0.964px;transform:scaleX(1.0500);transform-origin:0 0;">0.01%</div>
<div class="t" style="left:1094.20px;top:835.45px;font-size:16px;line-height:16px;font-weight:400;color:#006dca;letter-spacing:0.484px;transform:scaleX(1.0500);transform-origin:0 0;">check site backlinks</div>
<div class="t" style="left:1408.90px;top:835.45px;font-size:16px;line-height:16px;font-weight:400;color:#191b23;letter-spacing:1.667px;transform:scaleX(1.0500);transform-origin:0 0;">16</div>
<div class="t" style="left:1441.15px;top:835.45px;font-size:16px;line-height:16px;font-weight:400;color:#6c6e79;letter-spacing:-0.031px;transform:scaleX(0.9700);transform-origin:0 0;">0</div>
<div class="t" style="left:1494.00px;top:835.45px;font-size:16px;line-height:16px;font-weight:400;color:#191b23;letter-spacing:0.964px;transform:scaleX(1.0500);transform-origin:0 0;">0.01%</div>
<div class="t" style="left:53.60px;top:919.00px;font-size:16px;line-height:16px;font-weight:400;color:#575a66;letter-spacing:0.616px;transform:scaleX(1.0500);transform-origin:0 0;-webkit-text-stroke:0.35px #575a66">View full report</div>
</body></html>
